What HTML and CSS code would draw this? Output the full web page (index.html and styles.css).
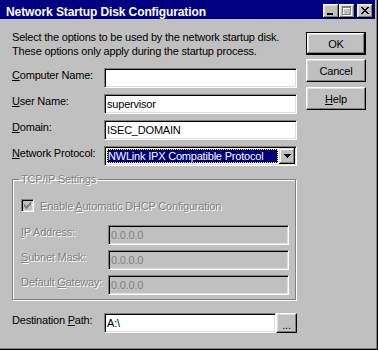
FILE: index.html
```html
<!DOCTYPE html>
<html lang="en">

<head>
    <title>Network Startup Disk Configuration</title>
    <link rel="stylesheet" href="styles.css">
</head>

<body>
    <div class="window">
        <div class="titlebar">
            <span class="title">Network Startup Disk Configuration</span>
            <div class="caption-buttons">
                <span class="cap-btn">
                    <svg width="16" height="14" viewBox="0 0 16 14" shape-rendering="crispEdges">
                        <path d="M4 9h6v2H4z" fill="#000" />
                    </svg>
                </span>
                <span class="cap-btn">
                    <svg width="16" height="14" viewBox="0 0 16 14" shape-rendering="crispEdges">
                        <path d="M4 3h9v2H4z M4 5h1v6H4z M12 5h1v6h-1z M4 11h9v1H4z" fill="#fff" />
                        <path d="M3 2h9v2H3z M3 4h1v6H3z M11 4h1v6h-1z M3 10h9v1H3z" fill="#808080" />
                    </svg>
                </span>
                <span class="cap-btn close">
                    <svg width="16" height="14" viewBox="0 0 16 14" shape-rendering="crispEdges">
                        <path d="M4 3h2v1H4z M10 3h2v1h-2z M5 4h2v1H5z M9 4h2v1H9z M6 5h4v1H6z M7 6h2v1H7z M6 7h4v1H6z M5 8h2v1H5z M9 8h2v1H9z M4 9h2v1H4z M10 9h2v1h-2z" fill="#000" />
                    </svg>
                </span>
            </div>
        </div>

        <div class="client">
            <div class="main">
                <p class="intro">
                    Select the options to be used by the network startup disk.<br>
                    These options only apply during the startup process.
                </p>

                <div class="row">
                    <label for="computer"><u>C</u>omputer Name:</label>
                    <input type="text" id="computer" class="field">
                </div>
                <div class="row">
                    <label for="user"><u>U</u>ser Name:</label>
                    <input type="text" id="user" class="field" value="supervisor">
                </div>
                <div class="row">
                    <label for="domain"><u>D</u>omain:</label>
                    <input type="text" id="domain" class="field" value="ISEC_DOMAIN">
                </div>
                <div class="row">
                    <label><u>N</u>etwork Protocol:</label>
                    <div class="combo">
                        <span class="combo-value">NWLink IPX Compatible Protocol</span>
                        <span class="combo-btn">
                            <svg width="7" height="4" viewBox="0 0 7 4" shape-rendering="crispEdges">
                                <path d="M0 0h7v1H0z M1 1h5v1H1z M2 2h3v1H2z M3 3h1v1H3z" fill="#000" />
                            </svg>
                        </span>
                    </div>
                </div>

                <fieldset class="group">
                    <legend class="disabled-text">TCP/IP Settings</legend>
                    <div class="check-row">
                        <span class="checkbox">
                            <svg width="9" height="9" viewBox="0 0 9 9" shape-rendering="crispEdges">
                                <path d="M7 1h1v1h-1z M6 2h2v1h-2z M1 3h1v1H1z M5 3h3v1H5z M1 4h2v1H1z M4 4h3v1H4z M1 5h5v1H1z M2 6h3v1H2z M3 7h1v1H3z" fill="#808080" />
                            </svg>
                        </span>
                        <span class="disabled-text">Enable <u>A</u>utomatic DHCP Configuration</span>
                    </div>
                    <div class="row group-row">
                        <label class="disabled-text"><u>I</u>P Address:</label>
                        <input type="text" class="field" value="0.0.0.0" disabled>
                    </div>
                    <div class="row group-row">
                        <label class="disabled-text"><u>S</u>ubnet Mask:</label>
                        <input type="text" class="field" value="0.0.0.0" disabled>
                    </div>
                    <div class="row group-row">
                        <label class="disabled-text">Default <u>G</u>ateway:</label>
                        <input type="text" class="field" value="0.0.0.0" disabled>
                    </div>
                </fieldset>

                <div class="row path-row">
                    <label for="path">Destination <u>P</u>ath:</label>
                    <input type="text" id="path" class="field" value="A:\">
                    <button class="btn btn-browse">...</button>
                </div>
            </div>

            <div class="actions">
                <button class="btn btn-default">OK</button>
                <button class="btn btn-cancel">Cancel</button>
                <button class="btn btn-help"><u>H</u>elp</button>
            </div>
        </div>
    </div>
</body>

</html>
```

FILE: styles.css
```css
* {
    box-sizing: border-box;
}

body {
    margin: 0;
    font-family: "Liberation Sans", Arial, sans-serif;
    font-size: 11px;
    letter-spacing: -0.2px;
    color: #000;
}

.window {
    width: 378px;
    height: 350px;
    background: #c0c0c0;
    border-right: 1px solid #000;
    border-bottom: 1px solid #000;
    box-shadow: inset -1px -1px #808080;
    padding-right: 2px;
}

/* title bar */

.titlebar {
    display: flex;
    height: 19px;
    background: #000080;
    color: #fff;
}

.title {
    flex: 1;
    padding: 5px 0 0 6px;
    font-size: 12px;
    font-weight: bold;
    line-height: 14px;
    letter-spacing: -0.1px;
}

.caption-buttons {
    display: flex;
    margin-top: 4px;
    margin-right: 2px;
}

.cap-btn {
    width: 16px;
    height: 14px;
    background: #c0c0c0;
    box-shadow: inset -1px -1px #000, inset 1px 1px #fff, inset -2px -2px #808080, inset 2px 2px #dfdfdf;
}

.cap-btn svg {
    display: block;
}

.cap-btn.close {
    margin-left: 2px;
}

/* dialog body */

.client {
    display: flex;
    padding: 11px 0 0 12px;
}

.main {
    width: 285px;
}

.intro {
    margin: 0 0 10px;
    line-height: 14px;
}

.row {
    display: grid;
    grid-template-columns: 92px 193px;
    margin-bottom: 6px;
}

.row label {
    line-height: 14px;
}

.field {
    height: 20px;
    margin: 0;
    padding: 0 2px;
    font: inherit;
    letter-spacing: inherit;
    color: #000;
    background: #fff;
    border: 1px solid;
    border-color: #808080 #fff #fff #808080;
    box-shadow: inset 1px 1px #000, inset -1px -1px #dfdfdf;
    outline: none;
}

.field:disabled {
    background: #c0c0c0;
    color: #808080;
}

.disabled-text {
    color: #808080;
    text-shadow: 1px 1px #fff;
}

/* combo box */

.combo {
    display: flex;
    height: 20px;
    padding: 1px;
    background: #fff;
    border: 1px solid;
    border-color: #808080 #fff #fff #808080;
    box-shadow: inset 1px 1px #000, inset -1px -1px #dfdfdf;
}

.combo-value {
    flex: 1;
    margin: 1px;
    padding-left: 1px;
    line-height: 14px;
    background: #000080;
    color: #fff;
    outline: 1px dotted #ffff00;
    outline-offset: -1px;
    white-space: nowrap;
    overflow: hidden;
}

.combo-btn {
    width: 16px;
    display: flex;
    align-items: center;
    justify-content: center;
    background: #c0c0c0;
    box-shadow: inset -1px -1px #000, inset 1px 1px #dfdfdf, inset -2px -2px #808080, inset 2px 2px #fff;
}

.combo-btn svg {
    display: block;
}

/* TCP/IP group */

.group {
    width: 284px;
    min-width: 0;
    margin: 3px 0 13px;
    padding: 13px 0 4px 8px;
    border: 1px solid #808080;
    box-shadow: inset 1px 1px #fff, 1px 1px #fff;
}

.group legend {
    padding: 0 2px;
    margin-left: -2px;
    line-height: 14px;
}

.check-row {
    display: flex;
    align-items: center;
    gap: 6px;
    height: 13px;
    margin-bottom: 13px;
}

.checkbox {
    width: 13px;
    height: 13px;
    padding: 1px;
    background: #c0c0c0;
    border: 1px solid;
    border-color: #808080 #fff #fff #808080;
    box-shadow: inset 1px 1px #000, inset -1px -1px #dfdfdf;
}

.checkbox svg {
    display: block;
}

.group-row {
    grid-template-columns: 87px 181px;
    margin-bottom: 5px;
}

.group-row:last-child {
    margin-bottom: 0;
}

.path-row {
    grid-template-columns: 92px 172px 21px;
    margin-bottom: 0;
}

/* push buttons */

.btn {
    width: 60px;
    height: 23px;
    margin: 0;
    padding: 0;
    font: inherit;
    letter-spacing: inherit;
    color: #000;
    background: #c0c0c0;
    border: 1px solid;
    border-color: #fff #000 #000 #fff;
    box-shadow: inset -1px -1px #808080, inset 1px 1px #dfdfdf;
}

.btn-default {
    border-color: #000;
    box-shadow: inset -1px -1px #000, inset 1px 1px #fff, inset -2px -2px #808080, inset 2px 2px #dfdfdf;
}

.actions {
    display: flex;
    flex-direction: column;
    margin-left: 9px;
    padding-top: 2px;
}

.btn-cancel {
    margin-top: 4px;
}

.btn-help {
    margin-top: 5px;
}

.btn-browse {
    width: 21px;
    height: 20px;
    padding-top: 3px;
}
```
